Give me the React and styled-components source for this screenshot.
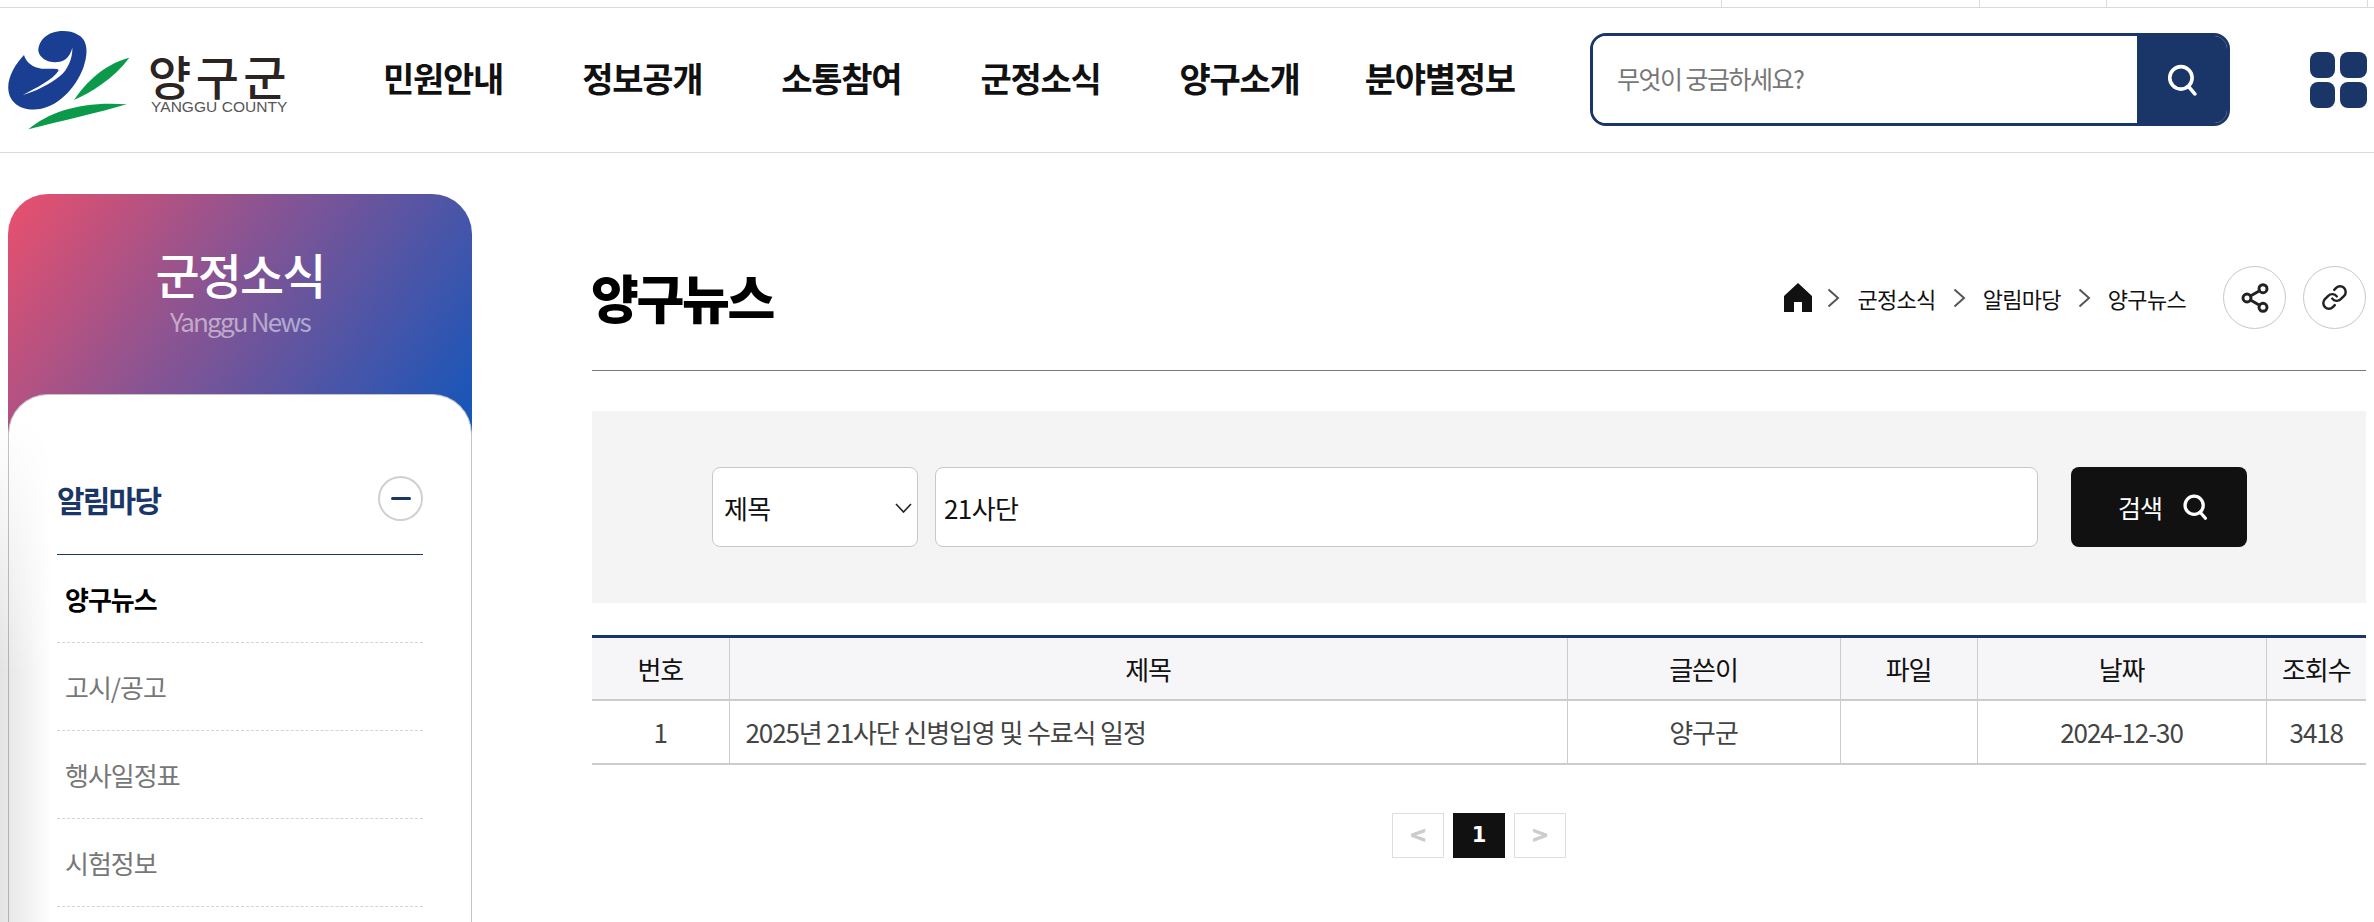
import React from 'react';
import styled, { createGlobalStyle } from 'styled-components';
import { Share2, Link } from 'lucide-react';

const FONT = '"Noto Sans CJK KR", "Noto Sans", sans-serif';
const NAVY = '#1a3668';

const GlobalStyle = createGlobalStyle`
  html, body {
    margin: 0;
    padding: 0;
    background: #fff;
    font-family: ${FONT};
  }
  * { box-sizing: border-box; }
`;

const Page = styled.div`
  position: relative;
  width: 2374px;
  height: 922px;
  overflow: hidden;
  display: flex;
  flex-direction: column;
`;

const LeftShade = styled.div`
  position: absolute;
  left: 0;
  top: 415px;
  bottom: 0;
  width: 52px;
  pointer-events: none;
  background: linear-gradient(90deg, rgba(0, 0, 0, 0.11), rgba(0, 0, 0, 0));
  mask-image: linear-gradient(180deg, transparent, #000 260px);
`;

const TopStrip = styled.div`
  height: 8px;
  flex: none;
  display: flex;
  justify-content: flex-end;
  border-bottom: 1px solid #d9d9d9;
`;

const StripCell = styled.div`
  width: ${(p) => p.$width}px;
  border-left: 1px solid #dcdcdc;
`;

const Header = styled.header`
  height: 145px;
  flex: none;
  display: flex;
  align-items: center;
  padding-left: 8px;
  border-bottom: 1px solid #d9d9d9;
`;

const LogoLink = styled.a`
  width: 279px;
  height: 110px;
  flex: none;
  display: flex;
  align-items: flex-start;
`;

const LogoMark = styled.svg`
  width: 127px;
  height: 103px;
  margin-top: 6px;
  flex: none;
`;

const LogoText = styled.div`
  margin: 29px 0 0 13px;
  display: flex;
  flex-direction: column;
  color: #2b2422;
`;

const LogoKo = styled.span`
  font-size: 47px;
  line-height: 42px;
  font-weight: 500;
  letter-spacing: 4.4px;
  white-space: nowrap;
`;

const LogoEn = styled.span`
  font-family: "Liberation Sans", Arial, sans-serif;
  font-size: 15.5px;
  line-height: 16px;
  margin: 3px 0 0 3px;
  color: #555;
  letter-spacing: 0.05px;
  white-space: nowrap;
`;

const Nav = styled.nav`
  margin: -5px 0 0 96px;
  width: 1135px;
  display: flex;
  gap: 79px;
  flex: none;
`;

const NavItem = styled.a`
  font-size: 34px;
  line-height: 44px;
  font-weight: 700;
  color: #111;
  letter-spacing: -1.25px;
  white-space: nowrap;
  &:last-child {
    margin-left: -14px;
  }
`;

const TopSearch = styled.form`
  margin: -1px 0 0 72px;
  width: 640px;
  height: 93px;
  flex: none;
  display: flex;
  border: 3px solid ${NAVY};
  border-radius: 16px;
  overflow: hidden;
`;

const TopInput = styled.input`
  flex: 1;
  min-width: 0;
  border: 0;
  outline: 0;
  padding: 0 0 4px 24px;
  font-family: ${FONT};
  font-size: 25px;
  letter-spacing: -1.5px;
  &::placeholder {
    color: #777;
    opacity: 1;
  }
`;

const TopSearchButton = styled.button`
  width: 90px;
  border: 0;
  padding: 0;
  background: ${NAVY};
  display: flex;
  align-items: center;
  justify-content: center;
`;

const GridIcon = styled.svg`
  margin: -1px 0 0 80px;
  width: 57px;
  height: 56px;
  flex: none;
`;

const Body = styled.div`
  flex: 1;
  min-height: 0;
  display: flex;
  padding: 0 8px;
`;

const Sidebar = styled.aside`
  width: 464px;
  flex: none;
  margin-top: 41px;
  display: flex;
  flex-direction: column;
`;

const SideHead = styled.div`
  height: 240px;
  flex: none;
  padding-top: 49px;
  border-radius: 40px 40px 0 0;
  background: linear-gradient(125deg, #e4506f 3%, #8a5492 42%, #1a56b8 96%);
  text-align: center;
`;

const SideTitle = styled.h2`
  margin: 0;
  font-size: 48px;
  line-height: 60px;
  font-weight: 500;
  letter-spacing: -1.9px;
  color: #fff;
`;

const SideSub = styled.div`
  margin-top: 2px;
  font-size: 26px;
  line-height: 32px;
  letter-spacing: -1.8px;
  color: rgba(255, 255, 255, 0.5);
`;

const SideCard = styled.div`
  flex: 1;
  margin-top: -40px;
  position: relative;
  background: #fff;
  border: 1px solid #c4c4c4;
  border-bottom: 0;
  border-radius: 40px 40px 0 0;
  padding: 0 48px;
`;

const GroupRow = styled.div`
  height: 160px;
  padding-top: 81px;
  border-bottom: 1px solid ${NAVY};
  display: flex;
  justify-content: space-between;
  align-items: flex-start;
`;

const GroupTitle = styled.h3`
  margin: 4px 0 0;
  font-size: 30px;
  line-height: 38px;
  font-weight: 700;
  letter-spacing: -1.8px;
  color: ${NAVY};
`;

const Collapse = styled.button`
  width: 45px;
  height: 45px;
  padding: 0;
  border: 2px solid #d0d0d0;
  border-radius: 50%;
  background: #fff;
  display: flex;
  align-items: center;
  justify-content: center;
  &::before {
    content: "";
    width: 20px;
    height: 3px;
    border-radius: 2px;
    background: ${NAVY};
  }
`;

const SideList = styled.ul`
  margin: 0;
  padding: 0;
  list-style: none;
`;

const SideItem = styled.li`
  height: 88px;
  padding: 0 0 0 8px;
  display: flex;
  align-items: center;
  border-bottom: 1px dashed #d4d4d4;
  font-size: 26px;
  letter-spacing: -1px;
  font-weight: ${(p) => (p.$active ? 700 : 400)};
  color: ${(p) => (p.$active ? '#000' : '#777')};
`;

const Main = styled.main`
  width: 1774px;
  margin-left: 120px;
  flex: none;
`;

const TitleRow = styled.div`
  padding: 113px 0 41px;
  display: flex;
  align-items: center;
  justify-content: space-between;
  border-bottom: 1px solid #777;
`;

const PageTitle = styled.h1`
  margin: 0 0 1px -1px;
  font-size: 52px;
  line-height: 60px;
  font-weight: 900;
  letter-spacing: -2.3px;
  color: #000;
`;

const Crumbs = styled.div`
  display: flex;
  align-items: center;
`;

const HomeIcon = styled.svg`
  width: 28px;
  height: 29px;
  margin-right: 15px;
`;

const CrumbArrow = styled.svg`
  width: 13px;
  height: 20px;
  margin-right: 17px;
`;

const Crumb = styled.span`
  font-size: 22px;
  line-height: 30px;
  letter-spacing: -0.7px;
  margin-right: 17px;
  color: #111;
  white-space: nowrap;
`;

const RoundButton = styled.button`
  width: 63px;
  height: 63px;
  padding: 0;
  margin-left: ${(p) => p.$gap}px;
  border: 1px solid #c8c8c8;
  border-radius: 50%;
  background: #fff;
  color: #222;
  display: flex;
  align-items: center;
  justify-content: center;
`;

const FilterPanel = styled.form`
  margin-top: 40px;
  height: 192px;
  padding-left: 120px;
  background: #f4f4f4;
  display: flex;
  align-items: center;
`;

const SelectWrap = styled.div`
  position: relative;
  width: 206px;
  height: 80px;
  flex: none;
`;

const Select = styled.select`
  width: 100%;
  height: 100%;
  appearance: none;
  background: #fff;
  border: 1px solid #c8c8c8;
  border-radius: 8px;
  padding: 0 0 0 11px;
  font-family: ${FONT};
  font-size: 26px;
  letter-spacing: -0.6px;
  color: #111;
  outline: 0;
`;

const SelectArrow = styled.svg`
  position: absolute;
  right: 6px;
  top: 36px;
  width: 17px;
  height: 10px;
  pointer-events: none;
`;

const KeywordInput = styled.input`
  width: 1103px;
  height: 80px;
  margin-left: 17px;
  padding: 0 0 0 8px;
  flex: none;
  border: 1px solid #c8c8c8;
  border-radius: 8px;
  background: #fff;
  outline: 0;
  font-family: ${FONT};
  font-size: 26px;
  letter-spacing: -0.6px;
  color: #111;
`;

const FilterButton = styled.button`
  width: 176px;
  height: 80px;
  margin-left: 33px;
  flex: none;
  border: 0;
  border-radius: 8px;
  background: #111;
  color: #fff;
  font-family: ${FONT};
  font-size: 25px;
  letter-spacing: -1px;
  display: flex;
  align-items: center;
  justify-content: center;
  gap: 20px;
  padding: 0 0 0 8px;
`;

const Table = styled.table`
  width: 1774px;
  margin-top: 32px;
  border-collapse: collapse;
  table-layout: fixed;
  border-top: 3px solid ${NAVY};
  font-size: 26px;
  letter-spacing: -1.1px;
`;

const Th = styled.th`
  width: ${(p) => p.$width}px;
  height: 63px;
  padding: 0;
  background: #f6f6f8;
  font-weight: 400;
  color: #111;
  border-bottom: 2px solid #ccc;
  border-left: 1px solid #ccc;
  &:first-child { border-left: 0; }
`;

const Td = styled.td`
  height: 64px;
  padding: ${(p) => (p.$left ? '0 0 0 16px' : '0')};
  text-align: ${(p) => (p.$left ? 'left' : 'center')};
  color: #444;
  border-bottom: 2px solid #ccc;
  border-left: 1px solid #ccc;
  &:first-child { border-left: 0; }
`;

const Pagination = styled.div`
  margin-top: 48px;
  display: flex;
  justify-content: center;
  gap: 9px;
`;

const PageButton = styled.a`
  width: 52px;
  height: 45px;
  display: flex;
  align-items: center;
  justify-content: center;
  font-family: "DejaVu Sans", sans-serif;
  font-size: 21px;
  font-weight: 700;
  border: 1px solid ${(p) => (p.$active ? '#111' : '#ddd')};
  background: ${(p) => (p.$active ? '#111' : '#fff')};
  color: ${(p) => (p.$active ? '#fff' : '#ccc')};
  -webkit-text-stroke: ${(p) => (p.$active ? '0' : '0.8px #ccc')};
`;

const SearchIcon = ({ size = 32, weight = 3.4 }) => (
  <svg width={size} height={size} viewBox="0 0 30 30" fill="none" stroke="#fff" strokeWidth={weight} strokeLinecap="round">
    <circle cx="14" cy="13" r="10.5" />
    <path d="M21 21 L27 28" />
  </svg>
);

const Arrow = () => (
  <CrumbArrow viewBox="0 0 13 20" fill="none" stroke="#555" strokeWidth="2">
    <path d="M1.5 1.5 L11 10 L1.5 18.5" />
  </CrumbArrow>
);

const sideItems = ['양구뉴스', '고시/공고', '행사일정표', '시험정보'];
const navItems = ['민원안내', '정보공개', '소통참여', '군정소식', '양구소개', '분야별정보'];

export default function App() {
  return (
    <Page>
      <GlobalStyle />
      <TopStrip>
        <StripCell $width={258} />
        <StripCell $width={127} />
        <StripCell $width={261} />
        <StripCell $width={7} />
      </TopStrip>

      <Header>
        <LogoLink>
          <LogoMark viewBox="0 0 381 309">
            <path
              fill="#1a3f92"
              d="M166 0 C116 0 91 30 91 60 C96 85 126 98 156 92 C176 88 188 70 193 50 C194 80 181 115 156 135 C126 160 81 182 44 192 C86 170 136 145 151 120 C156 110 126 115 101 113 C76 110 54 95 48 72 C21 100 -2 140 1 175 C4 220 46 240 86 235 C146 230 201 175 226 110 C238 75 244 30 211 12 C196 2 181 0 166 0 Z"
            />
            <path fill="#0b9a4a" d="M364 80 C306 95 246 135 198 207 C246 185 316 145 364 80 Z" />
            <path fill="#0b9a4a" d="M61 295 C126 240 226 210 356 220 C276 245 156 270 61 295 Z" />
          </LogoMark>
          <LogoText>
            <LogoKo>양구군</LogoKo>
            <LogoEn>YANGGU COUNTY</LogoEn>
          </LogoText>
        </LogoLink>

        <Nav>
          {navItems.map((item) => (
            <NavItem key={item}>{item}</NavItem>
          ))}
        </Nav>

        <TopSearch>
          <TopInput placeholder="무엇이 궁금하세요?" />
          <TopSearchButton type="button" aria-label="검색">
            <SearchIcon />
          </TopSearchButton>
        </TopSearch>

        <GridIcon viewBox="0 0 57 56" fill="#1a3668">
          <rect x="0" y="0" width="25" height="26" rx="8" />
          <rect x="30" y="0" width="27" height="26" rx="8" />
          <rect x="0" y="30" width="25" height="26" rx="8" />
          <rect x="30" y="30" width="27" height="26" rx="8" />
        </GridIcon>
      </Header>

      <Body>
        <Sidebar>
          <SideHead>
            <SideTitle>군정소식</SideTitle>
            <SideSub>Yanggu News</SideSub>
          </SideHead>
          <SideCard>
            <GroupRow>
              <GroupTitle>알림마당</GroupTitle>
              <Collapse type="button" aria-label="접기" />
            </GroupRow>
            <SideList>
              {sideItems.map((item, i) => (
                <SideItem key={item} $active={i === 0}>{item}</SideItem>
              ))}
            </SideList>
          </SideCard>
        </Sidebar>

        <Main>
          <TitleRow>
            <PageTitle>양구뉴스</PageTitle>
            <Crumbs>
              <HomeIcon viewBox="0 0 28 29" fill="#111">
                <path d="M14 0 L28 13 V29 H18 V19 H10 V29 H0 V13 Z" />
              </HomeIcon>
              <Arrow />
              <Crumb>군정소식</Crumb>
              <Arrow />
              <Crumb>알림마당</Crumb>
              <Arrow />
              <Crumb>양구뉴스</Crumb>
              <RoundButton type="button" $gap={20} aria-label="공유">
                <Share2 size={32} strokeWidth={2.2} />
              </RoundButton>
              <RoundButton type="button" $gap={17} aria-label="링크">
                <Link size={27} strokeWidth={2.2} />
              </RoundButton>
            </Crumbs>
          </TitleRow>

          <FilterPanel>
            <SelectWrap>
              <Select defaultValue="제목">
                <option>제목</option>
                <option>내용</option>
              </Select>
              <SelectArrow viewBox="0 0 17 10" fill="none" stroke="#222" strokeWidth="1.6">
                <path d="M1 1 L8.5 9 L16 1" />
              </SelectArrow>
            </SelectWrap>
            <KeywordInput defaultValue="21사단" />
            <FilterButton type="button">
              검색
              <SearchIcon size={26} weight={3.8} />
            </FilterButton>
          </FilterPanel>

          <Table>
            <thead>
              <tr>
                <Th $width={137}>번호</Th>
                <Th $width={838}>제목</Th>
                <Th $width={273}>글쓴이</Th>
                <Th $width={137}>파일</Th>
                <Th $width={289}>날짜</Th>
                <Th $width={100}>조회수</Th>
              </tr>
            </thead>
            <tbody>
              <tr>
                <Td>1</Td>
                <Td $left>2025년 21사단 신병입영 및 수료식 일정</Td>
                <Td>양구군</Td>
                <Td />
                <Td>2024-12-30</Td>
                <Td>3418</Td>
              </tr>
            </tbody>
          </Table>

          <Pagination>
            <PageButton>&lt;</PageButton>
            <PageButton $active>1</PageButton>
            <PageButton>&gt;</PageButton>
          </Pagination>
        </Main>
      </Body>

      <LeftShade />
    </Page>
  );
}
